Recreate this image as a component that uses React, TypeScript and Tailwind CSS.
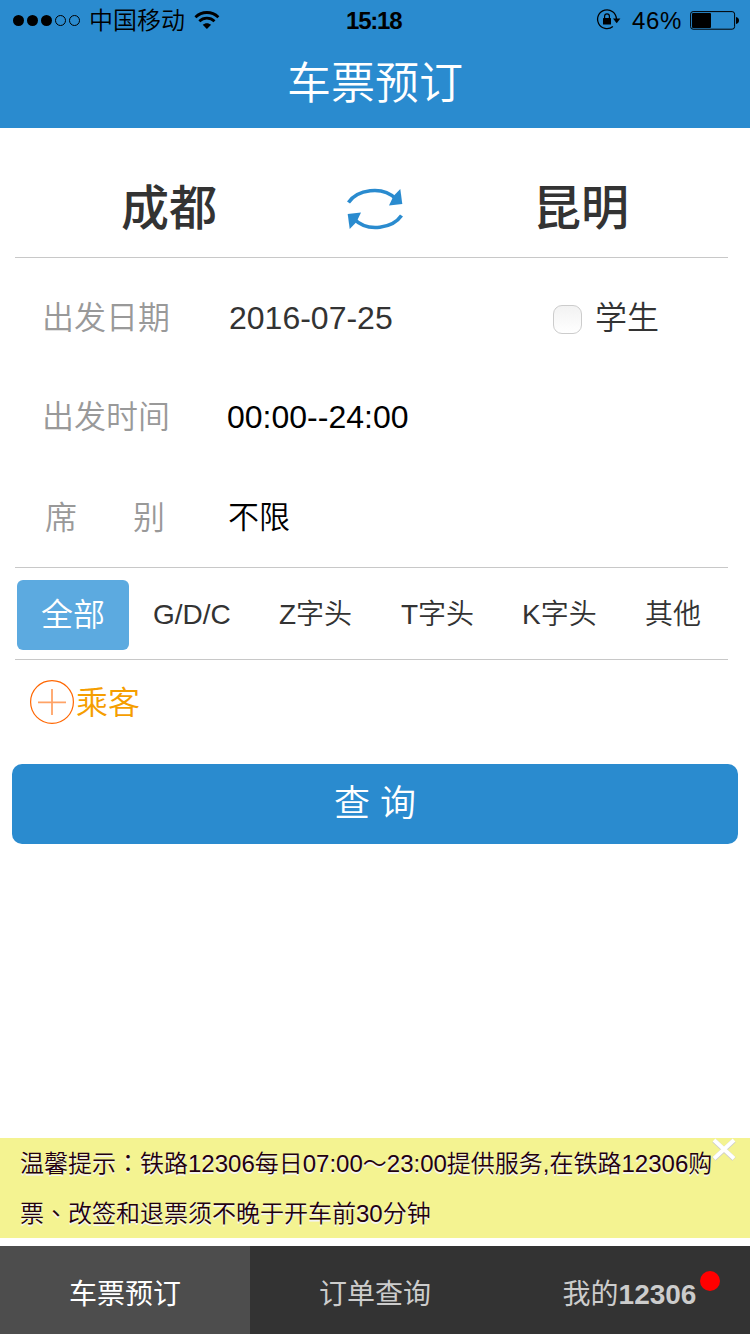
import React, { useState } from 'react';

const trainTypes = [
  { label: 'G/D/C', width: 'w-[126px]' },
  { label: 'Z字头', width: 'w-[122px]' },
  { label: 'T字头', width: 'w-[121px]' },
  { label: 'K字头', width: 'w-[123px]' },
  { label: '其他', width: 'w-[60px]' },
];

const StatusBar: React.FC = () => (
  <div className="flex h-10 items-center text-2xl leading-10 text-black">
    {/* Carrier */}
    <div className="flex w-[346px] items-center pl-[13px]">
      <div className="flex gap-[3px]">
        <span className="size-[11px] rounded-full bg-black" />
        <span className="size-[11px] rounded-full bg-black" />
        <span className="size-[11px] rounded-full bg-black" />
        <span className="size-[11px] rounded-full border border-black" />
        <span className="size-[11px] rounded-full border border-black" />
      </div>
      <span className="ml-[9px] pt-[2px]">中国移动</span>
      <svg width="26" height="20" viewBox="0 0 26 20" className="ml-[9px]">
        <g fill="none" stroke="#000" strokeWidth="2.8">
          <path d="M1.4 7.2C8 .9 17.8.9 24.4 7.2" />
          <path d="M5.3 11.2c4.3-4 10.9-4 15.2 0" />
        </g>
        <path d="M12.9 19l-4.2-4.2c2.4-2.2 6-2.2 8.4 0z" />
      </svg>
    </div>
    <span className="w-[250px] pt-[2px] font-bold tracking-[-1.2px]">15:18</span>
    <svg width="26" height="22" viewBox="0 0 26 22">
      <path d="M16.9 17.6A9.4 9.4 0 1 1 20.4 10" fill="none" stroke="#000" strokeWidth="1.3" />
      <path d="M17 9.500h7.4l-3.7 4.8z" />
      <rect x="7" y="9" width="8" height="6.600" rx=".6" />
      <path d="M8.6 9.3V7.2a2.4 2.4 0 0 1 4.8 0v2.1" fill="none" stroke="#000" strokeWidth="1.2" />
    </svg>
    <span className="ml-[10px] w-[58px] pt-[2px] tracking-[0.6px]">46%</span>
    <svg width="50" height="20" viewBox="0 0 50 20">
      <rect x=".6" y="1.6" width="44" height="17.6" rx="2.5" fill="none" stroke="#000" strokeWidth="1" />
      <rect x="2" y="3" width="19" height="15" rx="1" />
      <path d="M46 7c4 .6 4 6.400 0 7z" />
    </svg>
  </div>
);

const SwapIcon: React.FC = () => (
  <svg width="56" height="42" viewBox="0 0 56 42" fill="#2a8bcf">
    <path d="M1.500 14.500C10 2 35-3 49 11" fill="none" stroke="#2a8bcf" strokeWidth="3.600" />
    <path d="M53.300 1L55.300 16 42 17.500 46.500 8z" />
    <path d="M54.500 27.500C46 40 21 45 7 31" fill="none" stroke="#2a8bcf" strokeWidth="3.600" />
    <path d="M2.700 41L.7 26 14 24.500 9.500 34z" />
  </svg>
);

const App: React.FC = () => {
  const [student, setStudent] = useState(false);

  return (
    <div className="flex h-[1334px] w-[750px] flex-col overflow-hidden bg-white font-['Liberation_Sans','Noto_Sans_CJK_SC',sans-serif] font-[350] text-[#333]">
      {/* Header */}
      <header className="h-32 bg-[#2a8bcf]">
        <StatusBar />
        <h1 className="text-center text-[44px] leading-[88px] font-[350] text-white">车票预订</h1>
      </header>

      <main className="flex-1">
        {/* Stations */}
        <div className="ml-[15px] flex h-[130px] w-[713px] items-center border-b border-[#c8c8c8] pt-8 text-[48px] leading-[90px]">
          <span className="w-[225px] pl-[106px] font-medium whitespace-nowrap">成都</span>
          <div className="ml-[107px] w-[186px]">
            <SwapIcon />
          </div>
          <span className="font-medium">昆明</span>
        </div>

        {/* Query conditions */}
        <div className="ml-[15px] h-[310px] w-[713px] border-b border-[#c8c8c8] pt-[10px] text-[32px] leading-[100px]">
          <div className="flex h-[100px] items-center pl-[27px]">
            <span className="w-[187px] text-[#999]">出发日期</span>
            <span className="w-[324px]">2016-07-25</span>
            <button
              onClick={() => setStudent(!student)}
              className="mt-[3px] size-[29px] rounded-[9px] border border-[#ccc] bg-linear-to-b from-[#f2f2f2] to-white text-xl leading-none"
            >
              {student ? '✓' : ''}
            </button>
            <span className="ml-[13px]">学生</span>
          </div>
          <div className="flex h-[98px] items-center pl-[27px]">
            <span className="w-[185px] text-[#999]">出发时间</span>
            <span className="text-black">00:00--24:00</span>
          </div>
          <div className="flex h-[103px] items-center pl-[30px]">
            <span className="w-[88px] text-[#999]">席</span>
            <span className="w-[95px] text-[#999]">别</span>
            <span className="text-[31px] text-black">不限</span>
          </div>
        </div>

        {/* Train types */}
        <div className="ml-[15px] flex h-[92px] w-[713px] items-center border-b border-[#c8c8c8] pt-[2px] pl-[2px] text-[28px]">
          <button className="mr-6 h-[70px] w-28 shrink-0 rounded-md bg-[#5caae0] pt-px text-[32px] text-white">全部</button>
          {trainTypes.map((type) => (
            <span key={type.label} className={`shrink-0 ${type.width}`}>
              {type.label}
            </span>
          ))}
        </div>

        {/* Passenger */}
        <div className="mt-5 flex h-11 items-center pl-[30px] text-[32px] text-[#f59e00]">
          <svg width="44" height="44" viewBox="0 0 44 44" fill="none">
            <circle cx="22" cy="22" r="21.400" stroke="#ff6600" strokeWidth="1.200" />
            <path d="M8 22.300h28M22 9v26" stroke="#ff6600" strokeOpacity=".6" strokeWidth="1.800" />
          </svg>
          <span className="ml-[2px] pt-[2px]">乘客</span>
        </div>

        <button className="mx-3 mt-10 h-20 w-[726px] rounded-[10px] bg-[#2a8bcf] text-4xl text-white">查 询</button>
      </main>

      {/* Notice */}
      <div className="relative h-[100px] bg-[#f4f391] pt-px pl-5 text-2xl leading-[50px] text-[#220011] [text-shadow:0_2px_0_#f3f3f3]">
        <p className="h-[50px] whitespace-nowrap">
          温馨提示<span className="font-['Noto_Sans_CJK_TC',sans-serif] leading-none">：</span>铁路12306每日07:00～23:00提供服务,在铁路12306购
        </p>
        <p className="h-[50px] whitespace-nowrap">
          票<span className="font-['Noto_Sans_CJK_TC',sans-serif] leading-none">、</span>改签和退票须不晚于开车前30分钟
        </p>
        <svg width="24" height="24" viewBox="0 0 24 24" className="absolute top-0 right-[14px]">
          <path d="M2 2.500l20 18.500M22 2.500l-20 18.500" stroke="#ccc" strokeWidth="5" />
          <path d="M2 2l20 18.500M22 2l-20 18.500" stroke="#fff" strokeWidth="4" />
        </svg>
      </div>

      {/* Bottom tabs */}
      <nav className="mt-2 grid h-[88px] grid-cols-3 bg-[#333] text-center text-[28px] leading-[98px] font-normal text-[#ccc]">
        <div className="bg-[#4d4d4d] text-white">车票预订</div>
        <div>订单查询</div>
        <div className="relative pl-[9px]">
          我的<span className="font-bold">12306</span>
          <span className="absolute top-[25px] right-[30px] size-5 rounded-full bg-[#f00]" />
        </div>
      </nav>
    </div>
  );
};

export default App;
